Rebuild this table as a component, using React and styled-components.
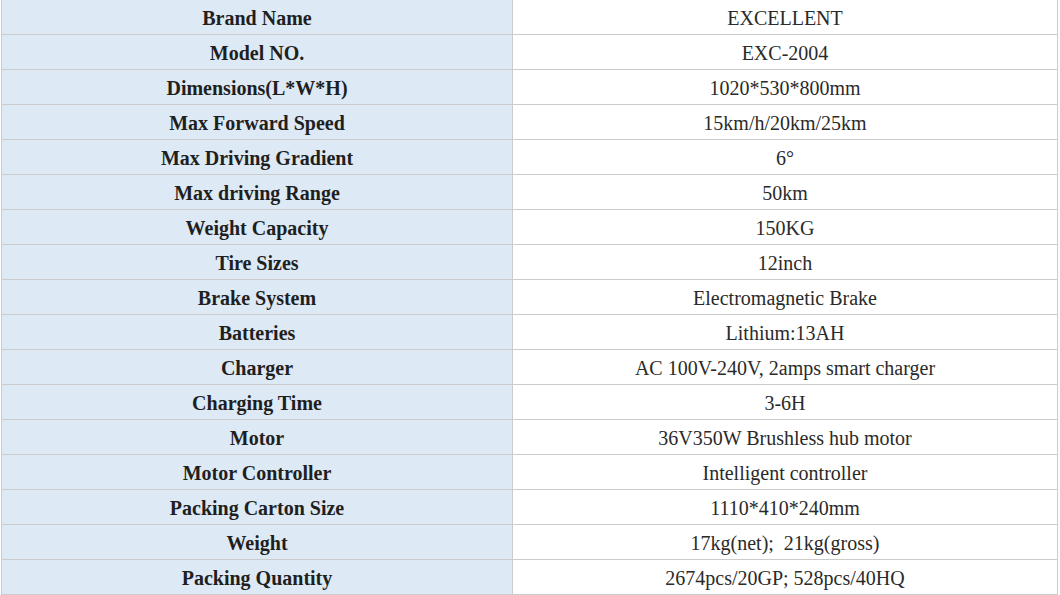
import { createGlobalStyle, styled } from "styled-components";

const GlobalStyle = createGlobalStyle`
  html, body {
    margin: 0;
    padding: 0;
    background: #ffffff;
  }
  body {
    font-family: "Liberation Serif", "Times New Roman", serif;
    color: #222222;
  }
`;

const Page = styled.div`
  width: 1060px;
  height: 595px;
  overflow: hidden;
  padding-left: 1px;
  box-sizing: border-box;
`;

const Table = styled.table`
  width: 1057px;
  border-collapse: collapse;
  margin-top: -1px;
  table-layout: fixed;
`;

const Cell = styled.td`
  height: 33px;
  padding: 1px 0 0;
  border: 1px solid #cccccc;
  text-align: center;
  vertical-align: middle;
  font-size: 20px;
  line-height: 22px;
  white-space: pre;
  font-weight: ${(p) => (p.$label ? "bold" : "normal")};
  background: ${(p) => (p.$label ? "#dde9f4" : "#ffffff")};
  color: ${(p) => (p.$label ? "#1f1f1f" : "#2a2a2a")};
`;

const specs = [
  ["Brand Name", "EXCELLENT"],
  ["Model NO.", "EXC-2004"],
  ["Dimensions(L*W*H)", "1020*530*800mm"],
  ["Max Forward Speed", "15km/h/20km/25km"],
  ["Max Driving Gradient", "6°"],
  ["Max driving Range", "50km"],
  ["Weight Capacity", "150KG"],
  ["Tire Sizes", "12inch"],
  ["Brake System", "Electromagnetic Brake"],
  ["Batteries", "Lithium:13AH"],
  ["Charger", "AC 100V-240V, 2amps smart charger"],
  ["Charging Time", "3-6H"],
  ["Motor", "36V350W Brushless hub motor"],
  ["Motor Controller", "Intelligent controller"],
  ["Packing Carton Size", "1110*410*240mm"],
  ["Weight", "17kg(net);  21kg(gross)"],
  ["Packing Quantity", "2674pcs/20GP; 528pcs/40HQ"],
];

export default function App() {
  return (
    <Page>
      <GlobalStyle />
      <Table>
        <colgroup>
          <col style={{ width: "511px" }} />
          <col />
        </colgroup>
        <tbody>
          {specs.map(([label, value]) => (
            <tr key={label}>
              <Cell $label>{label}</Cell>
              <Cell>{value}</Cell>
            </tr>
          ))}
        </tbody>
      </Table>
    </Page>
  );
}
